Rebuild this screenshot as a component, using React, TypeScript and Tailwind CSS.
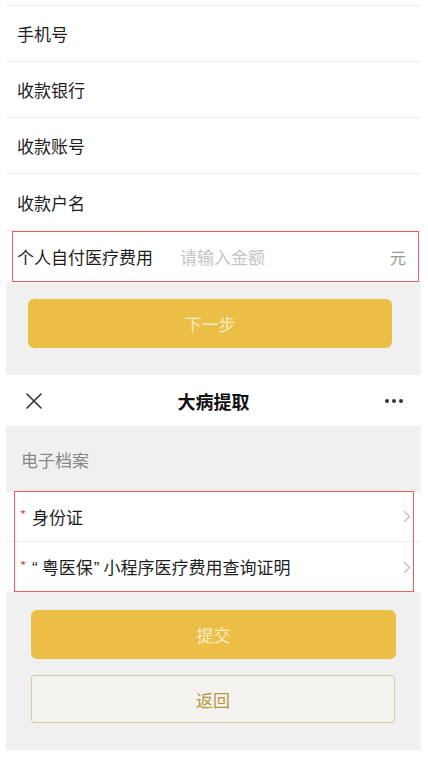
import React from "react";

const font = { fontFamily: '"Noto Sans CJK SC", "Noto Sans", sans-serif' };
const quoteFont = { fontFamily: '"Liberation Sans", "Noto Sans CJK SC", sans-serif' };

function Row({ label }: { label: string }) {
  return (
    <div className="h-[56px] flex items-center pl-[11px] border-b border-[#f0f0f0]">
      <span className="text-[17px] text-[#1e1e1e] leading-none">{label}</span>
    </div>
  );
}

function Chevron() {
  return (
    <svg width="8" height="13" viewBox="0 0 8 13" fill="none">
      <path d="M1.5 1.5 L6.5 6.5 L1.5 11.5" stroke="#c6c6c6" strokeWidth="1.6" strokeLinecap="round" strokeLinejoin="round" />
    </svg>
  );
}

export default function App() {
  return (
    <div className="w-[428px] h-[760px] bg-white overflow-hidden" style={font}>
      <div className="ml-[6px] w-[415px]">
        <div className="h-[6px] border-b border-[#f0f0f0]" />
        <Row label="手机号" />
        <Row label="收款银行" />
        <Row label="收款账号" />
        <div className="h-[57px] flex items-center pl-[11px] border-b border-[#f0f0f0]">
          <span className="text-[17px] text-[#1e1e1e] leading-none">收款户名</span>
        </div>
        <div className="relative h-[51px] flex items-center pl-[11px] pr-[15px]">
          <span className="text-[17px] text-[#1e1e1e] leading-none w-[163px]">个人自付医疗费用</span>
          <span className="text-[17px] text-[#c4c4c4] leading-none flex-1">请输入金额</span>
          <span className="text-[16px] text-[#999] leading-none">元</span>
          <div className="absolute left-[6px] top-0 w-[407px] h-[51px] border border-[#f25c5c]" />
        </div>
        <div className="bg-[#f0f0f0] h-[93px] pt-[17px]">
          <div className="ml-[22px] w-[364px] h-[49px] rounded-[6px] bg-[#ebbf46] flex items-center justify-center">
            <span className="text-[17px] text-[#fbecc4] leading-none">下一步</span>
          </div>
        </div>
        <div className="h-[51px] flex items-center justify-between px-[20px] bg-white">
          <svg width="16" height="16" viewBox="0 0 16 16">
            <path d="M1 1 L15 15 M15 1 L1 15" stroke="#333" strokeWidth="1.6" strokeLinecap="round" />
          </svg>
          <span className="text-[18px] font-bold text-[#111] leading-none">大病提取</span>
          <div className="flex gap-[3px] mr-[-2px]">
            <span className="w-[4px] h-[4px] rounded-full bg-[#333]" />
            <span className="w-[4px] h-[4px] rounded-full bg-[#333]" />
            <span className="w-[4px] h-[4px] rounded-full bg-[#333]" />
          </div>
        </div>
        <div className="bg-[#f0f0f0] h-[66px] flex items-center pl-[15px]">
          <span className="text-[17px] text-[#888] leading-none">电子档案</span>
        </div>
        <div className="relative">
          <div className="h-[50px] flex items-center pl-[14px] pr-[10px] border-b border-[#f0f0f0]">
            <span className="text-[#e0474c] text-[13px] leading-none mr-[6px] mt-[-4px]">*</span>
            <span className="text-[17px] text-[#1e1e1e] leading-none flex-1">身份证</span>
            <Chevron />
          </div>
          <div className="h-[50px] flex items-center pl-[14px] pr-[10px]">
            <span className="text-[#e0474c] text-[13px] leading-none mr-[6px] mt-[-4px]">*</span>
            <span className="text-[17px] text-[#1e1e1e] leading-none flex-1">
              <span style={quoteFont} className="pr-[4px]">“</span>粤医保<span style={quoteFont} className="pl-[1px] pr-[4px]">”</span>小程序医疗费用查询证明
            </span>
            <Chevron />
          </div>
          <div className="absolute left-[8px] top-[-1px] w-[400px] h-[101px] border border-[#f25c5c]" />
        </div>
        <div className="bg-[#f0f0f0] h-[158px] pt-[18px]">
          <div className="ml-[25px] w-[365px] h-[49px] rounded-[6px] bg-[#ebbf46] flex items-center justify-center">
            <span className="text-[17px] text-[#fbecc4] leading-none">提交</span>
          </div>
          <div className="ml-[25px] mt-[16px] w-[364px] h-[48px] rounded-[3px] bg-[#f3f2ef] border border-[#d6c9a2] flex items-center justify-center">
            <span className="text-[17px] text-[#b8973e] leading-none">返回</span>
          </div>
        </div>
      </div>
    </div>
  );
}
